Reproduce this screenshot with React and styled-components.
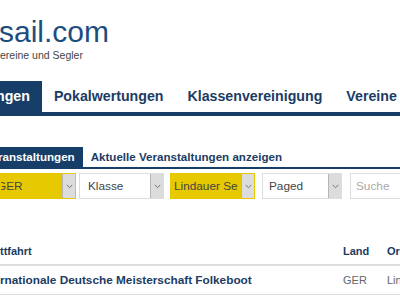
import React from 'react';
import styled, { createGlobalStyle } from 'styled-components';

const GlobalStyle = createGlobalStyle`
  html, body {
    margin: 0;
    padding: 0;
    background: #ffffff;
    overflow: hidden;
  }
  body {
    width: 400px;
    height: 300px;
    font-family: 'Liberation Sans', Arial, sans-serif;
  }
`;

const NAVY = '#173e68';
const TEXT_BLUE = '#1b3c64';
const YELLOW = '#e6c900';

const Page = styled.div`
  width: 400px;
  height: 300px;
  overflow: hidden;
  display: flex;
  flex-direction: column;
`;

const Brand = styled.div`
  display: flex;
  flex-direction: column;
  padding-top: 16px;
  height: 81px;
  box-sizing: border-box;
`;

const Logo = styled.div`
  font-size: 30px;
  line-height: 32px;
  color: #1d4d7e;
  margin-left: -1px;
`;

const Tagline = styled.div`
  font-size: 10.5px;
  line-height: 14px;
  color: #444444;
`;

const MainNav = styled.div`
  display: flex;
  border-bottom: 4px solid ${NAVY};
`;

const NavTab = styled.div`
  font-size: 14.2px;
  font-weight: 700;
  line-height: 31px;
  padding: 0 12px;
  white-space: nowrap;
  color: ${({ $active }) => ($active ? '#ffffff' : TEXT_BLUE)};
  background: ${({ $active }) => ($active ? NAVY : 'transparent')};
  ${({ $active }) => $active && 'padding-left: 0; margin-left: -4px;'}
`;

const SubNav = styled.div`
  display: flex;
  margin-top: 31px;
  border-bottom: 2px solid ${NAVY};
`;

const SubTab = styled.div`
  font-size: 11.6px;
  font-weight: 700;
  line-height: 20px;
  padding: 0 8px;
  white-space: nowrap;
  color: ${({ $active }) => ($active ? '#ffffff' : TEXT_BLUE)};
  background: ${({ $active }) => ($active ? NAVY : 'transparent')};
  ${({ $active }) => $active && 'padding-left: 0; margin-left: -2px;'}
`;

const Filters = styled.div`
  display: flex;
  margin-top: 4px;
  height: 26px;
`;

const Select = styled.div`
  display: flex;
  flex: none;
  width: ${({ $w }) => $w}px;
  margin-left: ${({ $ml }) => $ml}px;
  height: 26px;
  box-sizing: border-box;
  border: 1px solid ${({ $hl }) => ($hl ? YELLOW : '#dddddd')};
  background: ${({ $hl }) => ($hl ? YELLOW : '#ffffff')};
`;

const SelectText = styled.div`
  flex: 1;
  overflow: hidden;
  white-space: nowrap;
  font-size: 11.8px;
  line-height: 24px;
  text-indent: ${({ $pad }) => $pad}px;
  color: #444444;
`;

const Arrow = styled.div`
  width: 12px;
  flex: none;
  background: #dcdcdc;
  border-left: 1px solid #b5b5b5;
  display: flex;
  align-items: center;
  justify-content: center;
`;

const SearchBox = styled.div`
  flex: 1;
  margin-left: 8px;
  height: 26px;
  box-sizing: border-box;
  border: 1px solid #dddddd;
  border-right: none;
  font-size: 11.8px;
  line-height: 24px;
  padding-left: 5px;
  color: #aaaaaa;
`;

const Table = styled.div`
  margin-top: 38px;
  display: flex;
  flex-direction: column;
`;

const Row = styled.div`
  display: grid;
  grid-template-columns: 343px 44px 1fr;
  align-items: center;
  height: ${({ $head }) => ($head ? 27 : 28)}px;
  border-bottom: ${({ $head }) => ($head ? '2px' : '1px')} solid #dddddd;
`;

const Cell = styled.div`
  font-size: ${({ $big }) => ($big ? 11.8 : 11)}px;
  font-weight: ${({ $bold }) => ($bold ? 700 : 400)};
  color: ${({ $bold }) => ($bold ? TEXT_BLUE : '#666666')};
  white-space: nowrap;
  overflow: hidden;
`;

function Chevron() {
  return (
    <svg width="7" height="5" viewBox="0 0 7 5">
      <path d="M0.8 1 L3.5 3.6 L6.2 1" fill="none" stroke="#666" strokeWidth="0.9" />
    </svg>
  );
}

const filters = [
  { text: 'GER', w: 76, hl: true, pad: -4, ml: 0 },
  { text: 'Klasse', w: 85, hl: false, pad: 8, ml: 3 },
  { text: 'Lindauer Se', w: 85, hl: true, pad: 3, ml: 6 },
  { text: 'Paged', w: 80, hl: false, pad: 6, ml: 7 },
];

export default function App() {
  return (
    <Page>
      <GlobalStyle />
      <Brand>
        <Logo>sail.com</Logo>
        <Tagline>ereine und Segler</Tagline>
      </Brand>

      <MainNav>
        <NavTab $active>ngen</NavTab>
        <NavTab>Pokalwertungen</NavTab>
        <NavTab>Klassenvereinigung</NavTab>
        <NavTab>Vereine</NavTab>
      </MainNav>

      <SubNav>
        <SubTab $active>ranstaltungen</SubTab>
        <SubTab>Aktuelle Veranstaltungen anzeigen</SubTab>
      </SubNav>

      <Filters>
        {filters.map((f, i) => (
          <Select key={i} $w={f.w} $hl={f.hl} $ml={f.ml}>
            <SelectText $pad={f.pad}>{f.text}</SelectText>
            <Arrow>
              <Chevron />
            </Arrow>
          </Select>
        ))}
        <SearchBox>Suche</SearchBox>
      </Filters>

      <Table>
        <Row $head>
          <Cell $bold>ttfahrt</Cell>
          <Cell $bold>Land</Cell>
          <Cell $bold>Ort</Cell>
        </Row>
        <Row>
          <Cell $bold $big>rnationale Deutsche Meisterschaft Folkeboot</Cell>
          <Cell>GER</Cell>
          <Cell>Lindau</Cell>
        </Row>
      </Table>
    </Page>
  );
}
